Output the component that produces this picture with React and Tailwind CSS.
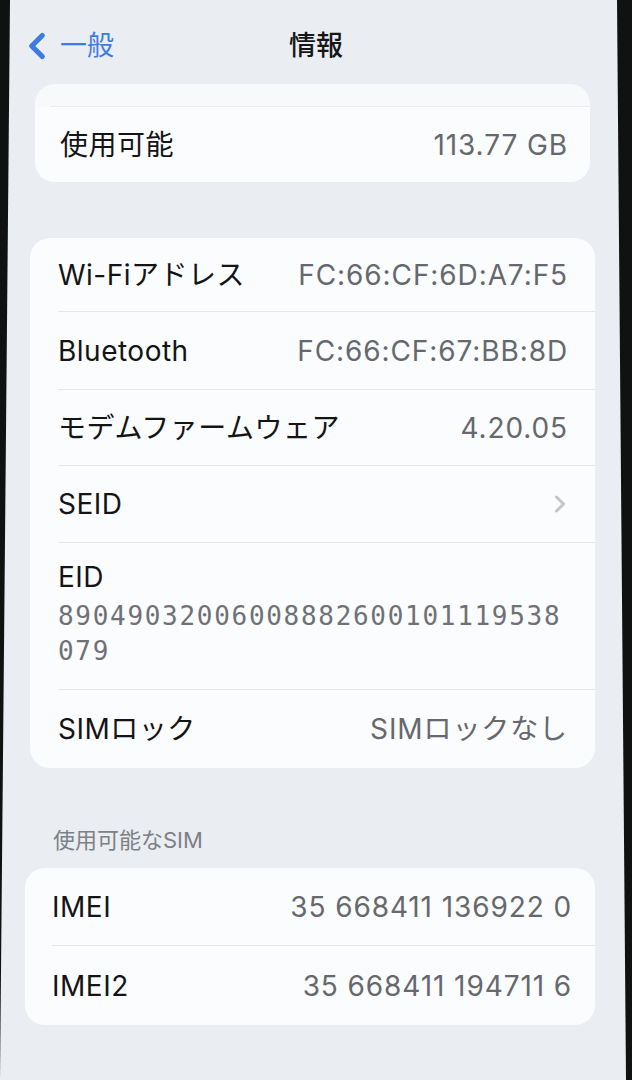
import { ChevronLeft, ChevronRight } from 'lucide-react'

const font = 'font-[Inter,"Noto_Sans_CJK_JP",sans-serif]'

function Row({ label, value, chevron, last, pr = 'pr-[27px]', className = '' }) {
  return (
    <div className={`flex items-center justify-between ${pr} ${last ? '' : 'border-b border-[#e3e6ea]'} ${className}`}>
      <span className="text-[28px] tracking-[0.5px] text-[#141416]">{label}</span>
      {chevron ? (
        <ChevronRight size={28} strokeWidth={2.6} className="text-[#c3c5ca] -mr-[6px]" />
      ) : (
        <span className="text-[28px] tracking-[0.9px] text-[#66686d]">{value}</span>
      )}
    </div>
  )
}

export default function App() {
  return (
    <div className={`w-[632px] h-[1080px] bg-[#101111] overflow-hidden ${font}`}>
      <div className="h-full bg-[#eaedf1] [clip-path:polygon(10px_0,617px_0,626px_100%,0_100%)]">
        {/* Nav bar */}
        <div className="h-[84px] grid grid-cols-[1fr_auto_1fr] items-center pt-[8px]">
          <div className="flex items-center pl-[16px] text-[#3d7be4]">
            <ChevronLeft size={42} strokeWidth={3} />
            <span className="text-[27px] ml-[2px]">一般</span>
          </div>
          <div className="text-[27px] font-medium text-[#161618]">情報</div>
          <div />
        </div>

        {/* Storage */}
        <div className="ml-[35px] mr-[42px] bg-[#f7f9fb] rounded-[20px] h-[98px] flex flex-col">
          <div className="h-[23px] border-b border-[#e8ebef] ml-[15px]" />
          <div className="flex-1 flex items-center justify-between pl-[25px] pr-[22px] bg-[#fafcfd] rounded-b-[20px]">
            <span className="text-[28px] tracking-[0.5px] text-[#141416]">使用可能</span>
            <span className="text-[28px] tracking-[0.9px] text-[#66686d]">113.77 GB</span>
          </div>
        </div>

        {/* Details */}
        <div className="mt-[56px] ml-[30px] mr-[37px] bg-[#fafcfd] rounded-[20px] pl-[28px]">
          <Row label="Wi-Fiアドレス" value="FC:66:CF:6D:A7:F5" className="h-[74px]" />
          <Row label="Bluetooth" value="FC:66:CF:67:BB:8D" className="h-[78px]" />
          <Row label="モデムファームウェア" value="4.20.05" className="h-[76px]" />
          <Row label="SEID" chevron className="h-[77px]" />
          <div className="border-b border-[#e3e6ea] pt-[16px] pb-[20px]">
            <div className="text-[28px] tracking-[0.5px] text-[#141416] leading-[36px]">EID</div>
            <div className="mt-[4px] font-['DejaVu_Sans_Mono',monospace] text-[26px] leading-[35px] tracking-[1.7px] text-[#6f7176]">
              89049032006008882600101119538
              <br />
              079
            </div>
          </div>
          <Row label="SIMロック" value="SIMロックなし" last className="h-[78px]" />
        </div>

        {/* Available SIM */}
        <div className="mt-[57px] mb-[13px] pl-[53px] text-[22px] leading-[30px] text-[#7d8086]">使用可能なSIM</div>
        <div className="ml-[25px] mr-[37px] bg-[#fafcfd] rounded-[20px] pl-[27px]">
          <Row label="IMEI" value="35 668411 136922 0" pr="pr-[23px]" className="h-[78px]" />
          <Row label="IMEI2" value="35 668411 194711 6" pr="pr-[23px]" last className="h-[79px]" />
        </div>
      </div>
    </div>
  )
}
